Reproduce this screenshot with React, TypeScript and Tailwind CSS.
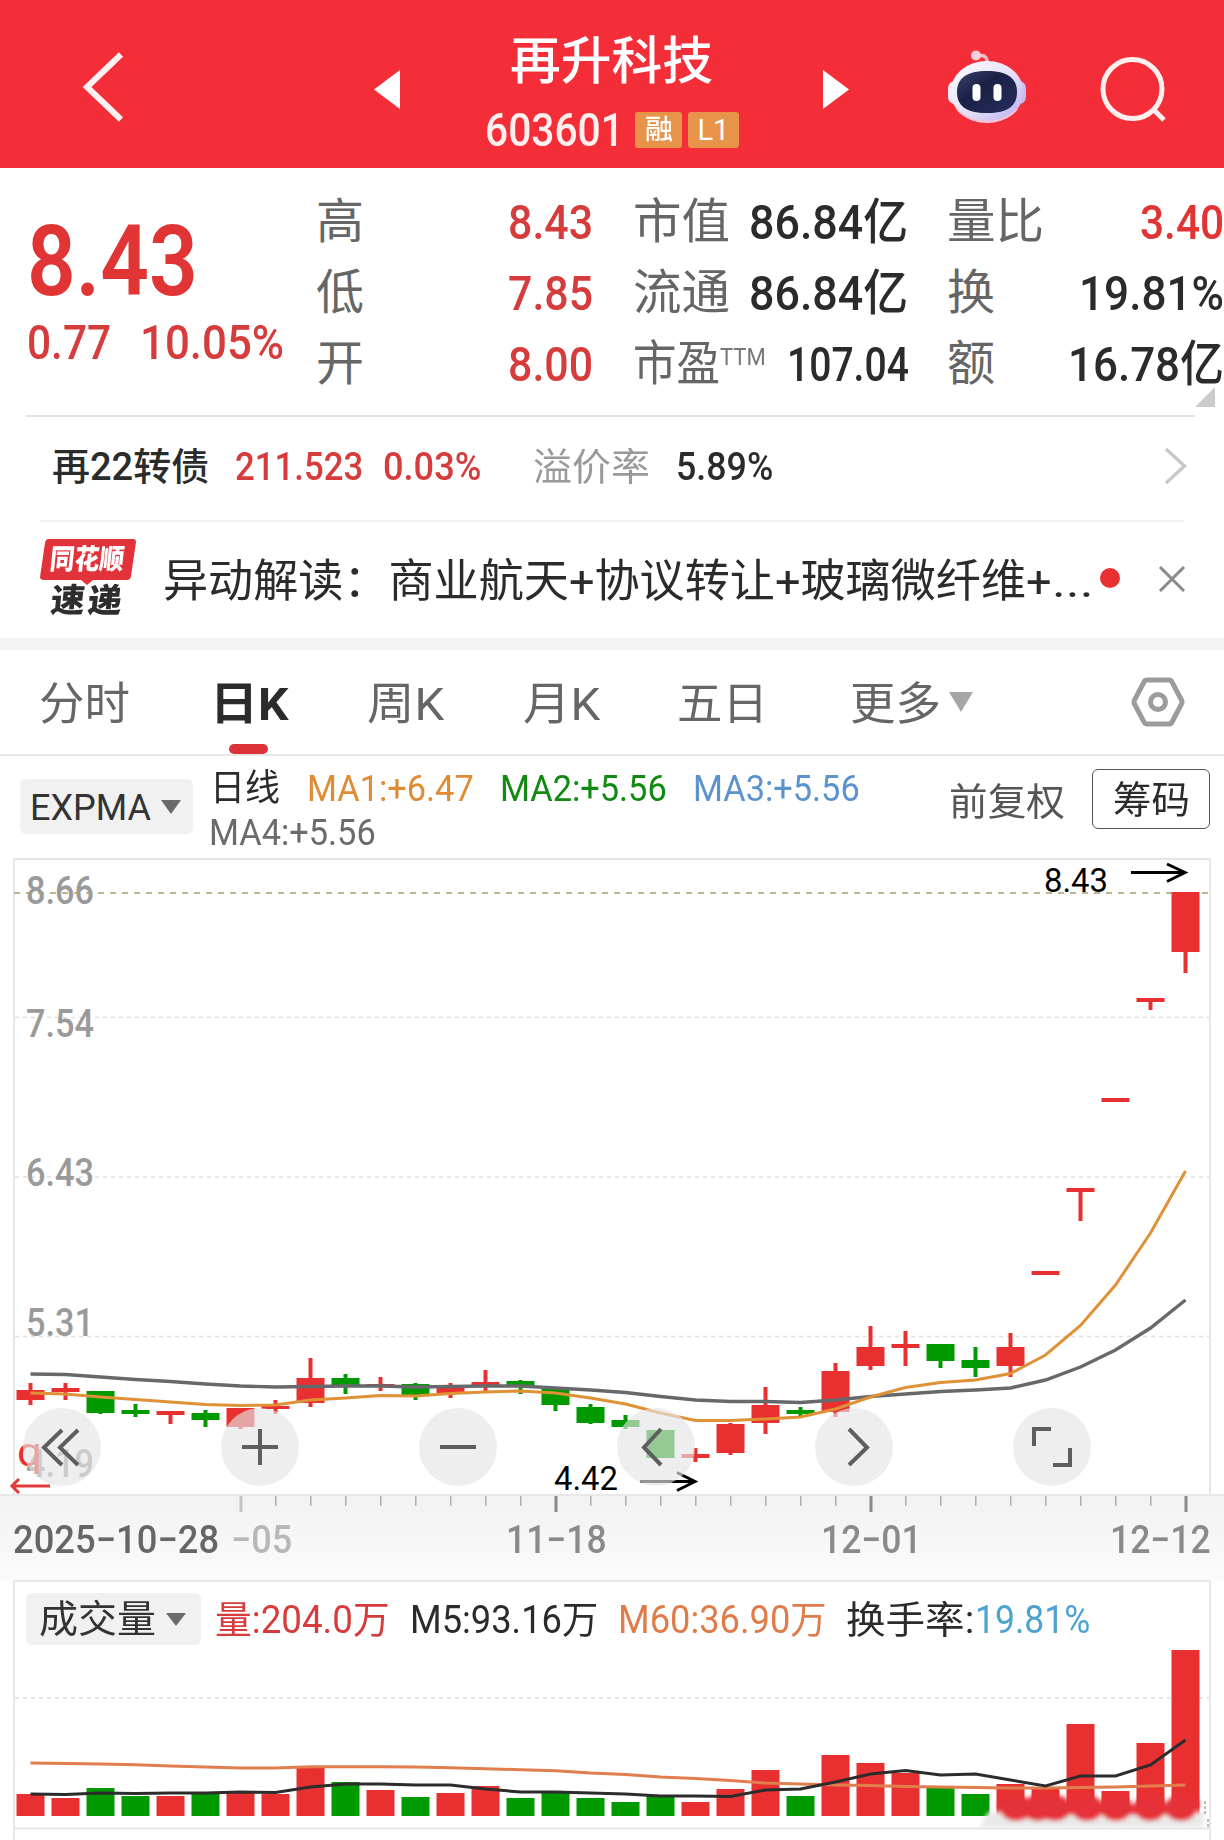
import { useLayoutEffect, useRef, useState, type ReactNode } from "react";
import clsx from "clsx";

const RED = "#e93030";
const GREEN = "#009900";
const FONT = "'Roboto','Noto Sans CJK SC',sans-serif";

function Fit({ className, children }: { className: string; children: ReactNode }) {
  const box = useRef<HTMLSpanElement>(null);
  const text = useRef<HTMLSpanElement>(null);
  const [scale, setScale] = useState(1);

  useLayoutEffect(() => {
    if (!box.current || !text.current) return;
    setScale(box.current.clientWidth / text.current.offsetWidth);
  }, [children]);

  return (
    <span ref={box} className={clsx("block shrink-0 whitespace-nowrap", className)}>
      <span ref={text} className="inline-block origin-left" style={{ transform: `scaleX(${scale})` }}>
        {children}
      </span>
    </span>
  );
}

function Header() {
  return (
    <header className="flex h-[168px] items-start bg-[#f32e38] text-white">
      <svg className="mt-[50px] ml-[80px] h-[74px] w-[46px]" viewBox="0 0 46 74" fill="none" stroke="#fff2f0" strokeWidth="6">
        <path d="M41 4.500L7 37l34 32.500" />
      </svg>
      <svg className="mt-[70px] ml-[248px] h-[39px] w-[26px]" viewBox="0 0 26 39" fill="#fff">
        <path d="M26 0v39L0 19.500z" />
      </svg>
      <div className="ml-[85px] w-[256px]">
        <Fit className="mt-[32px] ml-[25px] h-[60px] w-[203px] text-[51px] leading-[60px] font-medium">再升科技</Fit>
        <div className="mt-[13px] flex items-center">
          <Fit className="w-[139px] text-[46px] leading-[50px] font-medium text-[#fff0ef]">603601</Fit>
          <span className="ml-[11px] flex h-9 w-[47px] items-center justify-center rounded-[3px] bg-[#e8934a]">
            <Fit className="w-[28px] text-[27px] leading-9 font-medium">融</Fit>
          </span>
          <span className="ml-[6px] flex h-9 w-[51px] items-center justify-center rounded-[3px] bg-[#e8934a]">
            <Fit className="w-[32px] text-[29px] leading-9">L1</Fit>
          </span>
        </div>
      </div>
      <svg className="mt-[70px] ml-[82px] h-[39px] w-[26px]" viewBox="0 0 26 39" fill="#fff">
        <path d="M0 0v39l26-19.500z" />
      </svg>
      <svg className="mt-[48px] ml-[97px] h-[78px] w-[82px]" viewBox="0 0 82 78">
        <defs>
          <linearGradient id="shell" x1="0" y1="0" x2="1" y2="1">
            <stop offset="0" stopColor="#fff" />
            <stop offset=".55" stopColor="#e4def8" />
            <stop offset="1" stopColor="#b9a9f0" />
          </linearGradient>
          <linearGradient id="visor" x1="0" y1="0" x2="1" y2="1">
            <stop offset="0" stopColor="#39406a" />
            <stop offset=".4" stopColor="#1b2145" />
            <stop offset="1" stopColor="#262d5c" />
          </linearGradient>
        </defs>
        <path d="M32 8c7-2 10 2 9 9" fill="none" stroke="#f6bcd0" strokeWidth="3.500" />
        <circle cx="30" cy="7.500" r="5" fill="#f8cdda" />
        <rect x="2" y="33" width="14" height="23" rx="7" fill="#f1e8fb" />
        <rect x="66" y="33" width="14" height="23" rx="7" fill="#c9bdf4" />
        <ellipse cx="41" cy="44" rx="36.500" ry="31" fill="url(#shell)" />
        <path d="M11 61c12 16 47 17 60 0" fill="none" stroke="#f8c4d4" strokeWidth="2" />
        <path d="M41 23c20 0 30 7 30 21s-9 21-30 21-30-7-30-21 10-21 30-21z" fill="url(#visor)" />
        <rect x="26.500" y="36" width="8" height="17" rx="4" fill="#fff" />
        <rect x="47.500" y="36" width="8" height="17" rx="4" fill="#fff" />
      </svg>
      <svg className="mt-[56px] ml-[71px] h-[69px] w-[70px]" viewBox="0 0 70 69" fill="none" stroke="#fff0ee" strokeWidth="5">
        <circle cx="33.500" cy="33" r="29.500" />
        <path d="M54 53l11 11" />
      </svg>
    </header>
  );
}

const LABEL = "leading-[72px] text-[48px] text-[#666]";
const VALUE = "leading-[73px] text-[49px] font-medium";

function Quote() {
  return (
    <section className="flex h-[247px] pt-[18px] pl-[26px]">
      <div className="w-[292px] shrink-0 text-[#e13535]">
        <Fit className="mt-[26px] ml-px h-[100px] w-[171px] text-[98px] leading-[100px] font-semibold">8.43</Fit>
        <div className="-mt-[6px] ml-px flex text-[#d63c3c]">
          <Fit className="w-[84px] text-[49px] leading-[73px] font-medium">0.77</Fit>
          <Fit className="ml-[29px] w-[144px] text-[49px] leading-[73px] font-medium">10.05%</Fit>
        </div>
      </div>
      <div className="w-[191px] shrink-0">
        {[
          ["高", "8.43"],
          ["低", "7.85"],
          ["开", "8.00"],
        ].map(([label, value]) => (
          <div key={label} className="flex h-[71px]">
            <Fit className={clsx(LABEL, "-ml-[2px] w-[48px]")}>{label}</Fit>
            <Fit className={clsx(VALUE, "ml-[144px] w-[85px] text-[#d63c3c]")}>{value}</Fit>
          </div>
        ))}
      </div>
      <div className="ml-[124px] w-[276px] shrink-0 text-[#2b2b2b]">
        {["市值", "流通"].map((label) => (
          <div key={label} className="flex h-[71px]">
            <Fit className={clsx(LABEL, "w-[97px]")}>{label}</Fit>
            <Fit className={clsx(VALUE, "ml-[19px] w-[159px]")}>86.84亿</Fit>
          </div>
        ))}
        <div className="flex h-[71px]">
          <Fit className={clsx(LABEL, "w-[87px]")}>市盈</Fit>
          <Fit className="w-[46px] text-[24px] leading-[58px] text-[#777]">TTM</Fit>
          <Fit className={clsx(VALUE, "ml-[21px] w-[122px]")}>107.04</Fit>
        </div>
      </div>
      <div className="ml-[38px] w-[276px] shrink-0 text-[#2b2b2b]">
        <div className="flex h-[71px]">
          <Fit className={clsx(LABEL, "w-[97px]")}>量比</Fit>
          <Fit className={clsx(VALUE, "ml-[96px] w-[84px] text-[#e13535]")}>3.40</Fit>
        </div>
        <div className="flex h-[71px]">
          <Fit className={clsx(LABEL, "w-[48px]")}>换</Fit>
          <Fit className={clsx(VALUE, "ml-[84px] w-[145px]")}>19.81%</Fit>
        </div>
        <div className="flex h-[71px]">
          <Fit className={clsx(LABEL, "w-[48px]")}>额</Fit>
          <Fit className={clsx(VALUE, "ml-[73px] w-[156px]")}>16.78亿</Fit>
        </div>
        <svg className="-mt-[12px] ml-[248px] h-5 w-5" viewBox="0 0 20 20" fill="#ccc">
          <path d="M20 0v20H0z" />
        </svg>
      </div>
    </section>
  );
}

function Bond() {
  return (
    <section className="mr-[29px] ml-[26px] flex h-[105px] items-center border-t-2 border-[#e2e2e2] pb-[2px] pl-[26px] text-[38px] leading-[101px]">
      <Fit className="w-[157px] font-medium text-[#2b2b2b]">再22转债</Fit>
      <Fit className="ml-[26px] w-[128px] font-medium text-[#d63c3c]">211.523</Fit>
      <Fit className="ml-[20px] w-[98px] font-medium text-[#d63c3c]">0.03%</Fit>
      <Fit className="ml-[52px] w-[117px] text-[#999]">溢价率</Fit>
      <Fit className="ml-[26px] w-[97px] font-medium text-[#2b2b2b]">5.89%</Fit>
      <svg className="-mt-[3px] ml-[391px] h-[38px] w-6 shrink-0" viewBox="0 0 24 38" fill="none" stroke="#c9c9c9" strokeWidth="3.500">
        <path d="M2 2l18.500 17L2 36" />
      </svg>
    </section>
  );
}

function News() {
  return (
    <section className="mx-[40px] flex h-[118px] border-t-2 border-[#f0f0f0]">
      <div className="mt-[17px] w-[96px] shrink-0">
        <div className="relative h-[46px]">
          <svg className="absolute inset-0 h-[46px] w-[96px]" viewBox="0 0 96 46" fill="#e2333a">
            <path d="M9 0h84q3 0 3 3l-5 34q-.5 4-4 4H53l-6 5-6-5H4q-4 0-4-3L5 4q.5-4 4-4z" />
          </svg>
          <Fit className="relative ml-[10px] w-[74px] -skew-x-6 text-[28px] leading-[42px] font-black text-white">同花顺</Fit>
        </div>
        <div className="ml-[11px] flex -skew-x-6 gap-[3px] text-[33px] leading-[32px] font-black text-[#2e2e2e]">
          <Fit className="w-[34px]">速</Fit>
          <Fit className="w-[34px]">递</Fit>
        </div>
      </div>
      <Fit className="ml-[27px] w-[889px] text-[45px] leading-[119px] text-[#2b2b2b]">
        异动解读：商业航天+协议转让+玻璃微纤维+
      </Fit>
      <Fit className="w-[42px] text-[45px] leading-[119px] text-[#2b2b2b]">...</Fit>
      <span className="mt-[46px] ml-[6px] h-5 w-5 shrink-0 rounded-full bg-[#e93030]" />
      <svg className="mt-[44px] ml-[38px] h-[26px] w-[28px] shrink-0" viewBox="0 0 28 26" fill="none" stroke="#8a8a8a" strokeWidth="3">
        <path d="M2 1l24 24M26 1L2 25" />
      </svg>
    </section>
  );
}

function Tabs() {
  return (
    <nav className="flex h-[118px] border-t-[12px] border-b-2 border-t-[#f3f3f3] border-b-[#e8e8e8] pl-[39px] text-[45px] leading-[109px] text-[#666]">
      <Fit className="w-[91px]">分时</Fit>
      <div className="ml-[80px] w-[79px] shrink-0">
        <Fit className="h-[94px] w-[79px] font-bold text-[#2b2b2b]">日K</Fit>
        <span className="ml-[19px] block h-[10px] w-[39px] rounded-full bg-[#dd3338]" />
      </div>
      <Fit className="ml-[78px] w-[77px]">周K</Fit>
      <Fit className="ml-[79px] w-[77px]">月K</Fit>
      <Fit className="ml-[77px] w-[91px]">五日</Fit>
      <Fit className="ml-[82px] w-[91px]">更多</Fit>
      <svg className="mt-[42px] ml-[8px] h-5 w-6 shrink-0" viewBox="0 0 24 20" fill="#a6a6a6">
        <path d="M0 0h24L12 20z" />
      </svg>
      <svg className="mt-[27px] ml-[158px] h-[50px] w-[54px] shrink-0" viewBox="0 0 54 50" fill="none" stroke="#9b9b9b" strokeWidth="5" strokeLinejoin="round">
        <path d="M16 3h22q2 0 3 2l9.500 18q1 2 0 4L41 45q-1 2-3 2H16q-2 0-3-2L3.500 27q-1-2 0-4L13 5q1-2 3-2z" />
        <circle cx="27" cy="25" r="7.500" />
      </svg>
    </nav>
  );
}

function Indicators() {
  return (
    <section className="flex h-[102px] pl-[20px]">
      <div className="mt-[23px] flex h-[55px] w-[173px] shrink-0 items-center rounded-md bg-[#f1f1f1]">
        <Fit className="mt-[3px] ml-[10px] w-[121px] text-[36px] leading-[57px] text-[#333]">EXPMA</Fit>
        <svg className="ml-[10px] h-[14px] w-5" viewBox="0 0 20 14" fill="#6b6b6b">
          <path d="M0 0h20L10 14z" />
        </svg>
      </div>
      <div className="ml-[17px] w-[740px] shrink-0 text-[37px]">
        <div className="mt-[10px] flex h-[44px] leading-[46px]">
          <Fit className="w-[70px] text-[#2b2b2b]">日线</Fit>
          <Fit className="ml-[27px] w-[167px] text-[#e08c35]">MA1:+6.47</Fit>
          <Fit className="ml-[26px] w-[167px] text-[#118a11]">MA2:+5.56</Fit>
          <Fit className="ml-[26px] w-[167px] text-[#5a93cd]">MA3:+5.56</Fit>
        </div>
        <Fit className="-ml-px w-[167px] leading-[46px] text-[#6b6b6b]">MA4:+5.56</Fit>
      </div>
      <Fit className="-ml-px mt-[18px] w-[116px] text-[38px] leading-[57px] text-[#555]">前复权</Fit>
      <div className="mt-[13px] ml-[27px] flex h-[60px] w-[118px] justify-center rounded-md border-[1.5px] border-[#555]">
        <Fit className="w-[77px] text-[38px] leading-[60px] text-[#2b2b2b]">筹码</Fit>
      </div>
    </section>
  );
}

type Candle = [up: 0 | 1, top: number, bottom: number, high: number, low: number];

// Pixel rows of the plot, which starts at y = 858.
const CANDLES: Candle[] = [
  [1, 1390, 1400, 1383, 1405], [1, 1388, 1392, 1383, 1400], [0, 1391, 1413, 1391, 1414],
  [0, 1410, 1414, 1404, 1417], [1, 1411, 1415, 1411, 1424], [0, 1413, 1420, 1410, 1427],
  [1, 1408, 1427, 1408, 1429], [1, 1406, 1409, 1400, 1414], [1, 1378, 1403, 1358, 1407],
  [0, 1378, 1387, 1374, 1394], [1, 1384, 1386, 1377, 1391], [0, 1384, 1395, 1383, 1400],
  [1, 1387, 1394, 1383, 1398], [1, 1382, 1387, 1370, 1391], [0, 1381, 1387, 1380, 1394],
  [0, 1389, 1405, 1389, 1411], [0, 1407, 1423, 1404, 1424], [0, 1420, 1427, 1415, 1429],
  [0, 1430, 1458, 1430, 1458], [1, 1454, 1458, 1448, 1462], [1, 1424, 1453, 1423, 1455],
  [1, 1405, 1423, 1387, 1434], [0, 1410, 1414, 1407, 1416], [1, 1371, 1412, 1363, 1417],
  [1, 1347, 1366, 1326, 1370], [1, 1344, 1348, 1331, 1366], [0, 1344, 1361, 1344, 1368],
  [0, 1360, 1368, 1347, 1377], [1, 1347, 1366, 1333, 1377], [1, 1271, 1275, 1271, 1275],
  [1, 1188, 1192, 1188, 1221], [1, 1098, 1102, 1098, 1102], [1, 998, 1002, 998, 1010],
  [1, 892, 952, 892, 973],
];

const SLOW = [
  1374, 1374.5, 1377, 1379.5, 1381.5, 1384, 1386, 1387, 1386.5, 1386, 1386, 1387, 1386.5, 1386, 1386, 1388, 1390,
  1392.5, 1396.5, 1400, 1401.5, 1401.5, 1402.5, 1400, 1396.5, 1394, 1391.5, 1390, 1388, 1380, 1367, 1350, 1328, 1300,
];
const FAST = [
  1393, 1394, 1397, 1399.5, 1402, 1404.5, 1405.5, 1405, 1400, 1398, 1395.5, 1396, 1393.5, 1392, 1391, 1393, 1398,
  1404, 1413, 1420.5, 1420.5, 1419, 1417, 1409, 1397, 1387.5, 1382.5, 1380, 1373.5, 1355, 1325.5, 1285, 1233, 1171,
];

const VOLUME = [
  1794, 1798, 1788, 1796, 1796, 1793, 1793, 1794, 1768, 1782, 1790, 1797, 1793, 1786, 1798, 1792, 1798, 1802, 1795,
  1802, 1789, 1770, 1796, 1755, 1763, 1773, 1788, 1794, 1784, 1789, 1724, 1791, 1743, 1650,
];
const VOL_M5 = [
  1794, 1794.5, 1793, 1793.5, 1793, 1793, 1792, 1792.5, 1787, 1784, 1784, 1785, 1785, 1789, 1792, 1792, 1793, 1794,
  1796, 1796, 1796.5, 1790, 1789, 1782, 1774, 1770.5, 1775, 1774, 1780, 1786, 1776, 1776, 1765, 1740,
];
const VOL_M60 = [
  1763, 1763.5, 1764, 1764.7, 1766, 1767, 1768, 1768, 1766.7, 1766.7, 1766.7, 1767, 1767.7, 1768.7, 1769.7, 1770.7,
  1773, 1774.5, 1777, 1778.5, 1780.5, 1783, 1784, 1785, 1785.5, 1786.5, 1787, 1787.5, 1788, 1788, 1787.5, 1787, 1786,
  1785,
];

const cx = (i: number) => 30.5 + i * 35;
const points = (ys: number[]) => ys.map((y, i) => `${cx(i)},${y}`).join(" ");

const PRICES: [string, number][] = [
  ["8.66", 904],
  ["7.54", 1037],
  ["6.43", 1186],
  ["5.31", 1336],
  ["4.19", 1477],
];

const CONTROLS: ReactNode[] = [
  <path d="M39 22L21 39.500 39 57M55 22L37 39.500 55 57" />,
  <path d="M21 39h36M39 21v36" />,
  <path d="M21 39h36" />,
  <path d="M44 21L27 39.500 44 57" />,
  <path d="M34 21l18 18.500L34 57" />,
  <path d="M21 38V21h17M57 40v17H40" />,
];

function PriceChart() {
  return (
    <section className="relative h-[636px]">
      <svg className="block h-[636px] w-full" viewBox="0 858 1224 636" fontFamily={FONT}>
        <path d="M14 1494V859H1210V1494" fill="none" stroke="#e6e6e6" strokeWidth="2" />
        {[1017.5, 1177, 1336.5].map((y) => (
          <path key={y} d={`M15 ${y}H1209`} stroke="#e0e0e0" strokeWidth="1.500" strokeDasharray="4 4" />
        ))}
        {PRICES.map(([label, y]) => (
          <text key={label} x="26" y={y} fontSize="38" fontWeight="500" fill="#9a9a9a" textLength="68" lengthAdjust="spacingAndGlyphs">
            {label}
          </text>
        ))}
        <path d="M14 893H1210" stroke="#a8a070" strokeWidth="1.500" strokeDasharray="6 6" />
        {CANDLES.map(([up, top, bottom, high, low], i) => (
          <g key={i} fill={up ? RED : GREEN}>
            <rect x={cx(i) - 2} y={high} width="4" height={low - high} />
            <rect x={cx(i) - 14} y={top} width="28" height={bottom - top} />
          </g>
        ))}
        <polyline points={points(SLOW)} fill="none" stroke="#66696b" strokeWidth="3.400" />
        <polyline points={points(FAST)} fill="none" stroke="#df9136" strokeWidth="3" />
        <text x="17" y="1466" fontSize="40" fill={RED} textLength="25" lengthAdjust="spacingAndGlyphs">
          q
        </text>
        <path d="M50 1486H13M19 1479l-7 7 7 7" fill="none" stroke="#e03a3a" strokeWidth="3" />
        <g fontSize="33">
          <text x="1044" y="892" textLength="64" lengthAdjust="spacingAndGlyphs">8.43</text>
          <text x="554" y="1490" textLength="64" lengthAdjust="spacingAndGlyphs">4.42</text>
        </g>
        <g fill="none" stroke="#000" strokeWidth="3">
          <path d="M1131 872.500h54M1167 864l18 8.500-18 9" />
          <path d="M640 1481.500h54M677 1472.500l18 9-18 9" />
        </g>
      </svg>
      <div className="absolute top-[550px] left-[23px] flex gap-[120px]">
        {CONTROLS.map((icon, i) => (
          <button key={i} className="h-[78px] w-[78px] rounded-full bg-[#e5e5e5]/65">
            <svg className="h-[78px] w-[78px]" viewBox="0 0 78 78" fill="none" stroke="#5e5e5e" strokeWidth="4">
              {icon}
            </svg>
          </button>
        ))}
      </div>
    </section>
  );
}

function DateAxis() {
  return (
    <section className="h-[86px] bg-linear-to-b from-[#f2f2f2] to-[#fbfbfb]">
      <svg className="block h-[19px] w-full border-t-2 border-[#e8e8e8]" viewBox="0 1496 1224 17">
        {VOLUME.map((_, i) => {
          const major = i === 6 || i === 15 || i === 24 || i === 33;
          if (i < 6) return null;
          return (
            <rect
              key={i}
              x={cx(i) - (major ? 1 : 0.5)}
              y="1496"
              width={major ? 3 : 1.5}
              height={major ? 16 : 10}
              fill={i === 6 ? "#c4c4c4" : major ? "#8a8a8a" : "#b0b0b0"}
            />
          );
        })}
      </svg>
      <div className="flex pl-[13px] text-[39px] leading-[55px] font-medium text-[#8a8a8a]">
        <Fit className="w-[206px] text-[#666]">2025−10−28</Fit>
        <Fit className="ml-[12px] w-[61px] text-[#b8b8b8]">−05</Fit>
        <Fit className="ml-[214px] w-[101px]">11−18</Fit>
        <Fit className="ml-[214px] w-[101px]">12−01</Fit>
        <Fit className="ml-[188px] w-[101px]">12−12</Fit>
      </div>
    </section>
  );
}

function VolumeChart() {
  return (
    <section>
      <div className="mx-[13px] flex h-[70px] border-2 border-b-0 border-[#e8e8e8] pl-[11px] text-[38px] leading-[54px]">
        <div className="mt-[11px] flex h-[52px] w-[175px] shrink-0 items-center rounded-md bg-[#f1f1f1]">
          <Fit className="ml-[13px] w-[117px] text-[#333]">成交量</Fit>
          <svg className="ml-[10px] h-[13px] w-5" viewBox="0 0 20 13" fill="#6b6b6b">
            <path d="M0 0h20L10 13z" />
          </svg>
        </div>
        <Fit className="mt-[11px] ml-[14px] w-[175px] text-[#d63c3c]">量:204.0万</Fit>
        <Fit className="mt-[11px] ml-[20px] w-[188px] text-[#2b2b2b]">M5:93.16万</Fit>
        <Fit className="mt-[11px] ml-[20px] w-[209px] text-[#df7d4a]">M60:36.90万</Fit>
        <Fit className="mt-[11px] ml-[19px] w-[128px] text-[#2b2b2b]">换手率:</Fit>
        <Fit className="mt-[11px] ml-px w-[115px] text-[#4da3cf]">19.81%</Fit>
      </div>
      <svg className="block h-[190px] w-full" viewBox="0 1650 1224 190">
        <defs>
          <filter id="smear" x="-10%" y="-60%" width="120%" height="220%">
            <feGaussianBlur stdDeviation="2" />
          </filter>
        </defs>
        <path d="M14 1650V1840M1210 1650V1840M14 1828.500H1210" stroke="#e8e8e8" strokeWidth="2" />
        <path d="M15 1698H1209" stroke="#dedede" strokeWidth="1.500" strokeDasharray="4 4" />
        {VOLUME.map((y, i) => (
          <rect key={i} x={cx(i) - 14} y={y} width="28" height={1816 - y} fill={CANDLES[i][0] ? RED : GREEN} />
        ))}
        <g filter="url(#smear)">
          <path d="M988 1812h216v15H980z" fill="#e9e9e9" />
          <path d="M998 1804h190v11H1002z" fill="#e33e45" />
          <path d="M1183 1800h16v8l-6 6h-10z" fill="#e53038" />
          {[1016, 1038, 1055, 1087, 1116, 1150, 1181].map((x) => (
            <ellipse key={x} cx={x} cy="1808" rx="16" ry="13" fill="#e53038" />
          ))}
        </g>
        <path d="M1205 1801v14M1208 1819v8" stroke="#bbb" strokeWidth="2" strokeDasharray="3 2" />
        <polyline points={points(VOL_M60)} fill="none" stroke="#e07e4d" strokeWidth="3" />
        <polyline points={points(VOL_M5)} fill="none" stroke="#2c2c2c" strokeWidth="3" />
      </svg>
    </section>
  );
}

export default function App() {
  return (
    <main className="h-[1840px] w-[1224px] overflow-hidden bg-white font-['Roboto','Noto_Sans_CJK_SC',sans-serif]">
      <Header />
      <Quote />
      <Bond />
      <News />
      <Tabs />
      <Indicators />
      <PriceChart />
      <DateAxis />
      <VolumeChart />
    </main>
  );
}
